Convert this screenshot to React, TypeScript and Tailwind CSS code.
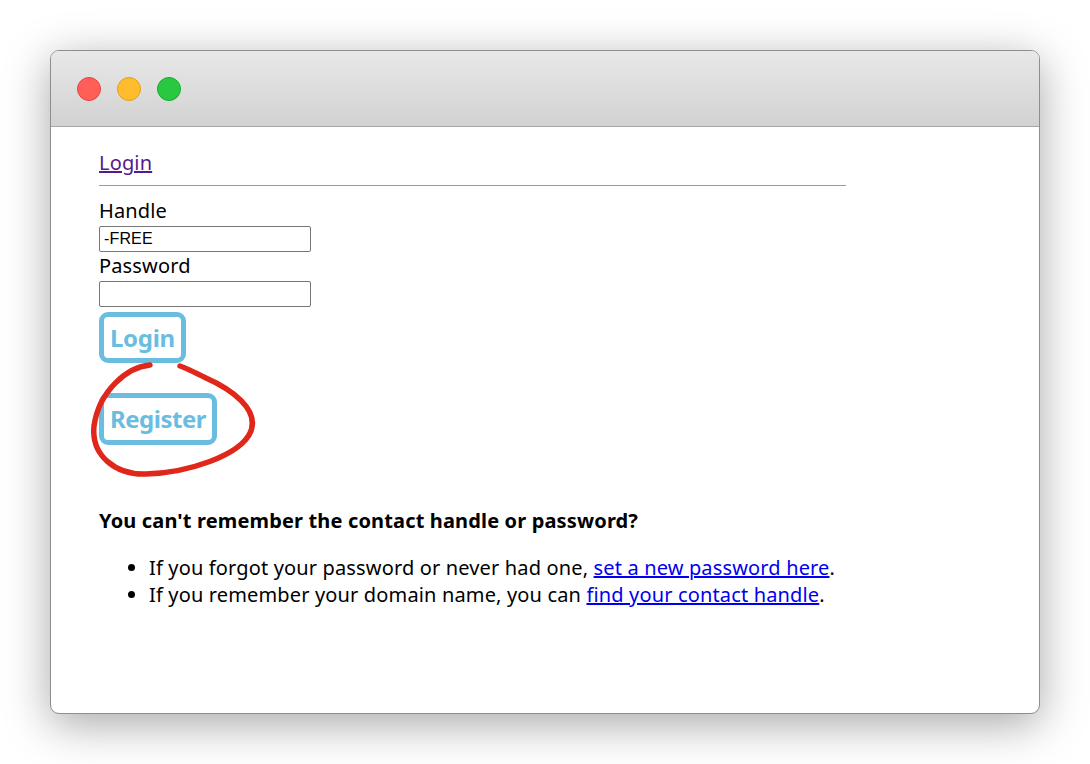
import React from 'react';

const font = { fontFamily: '"Noto Sans", "Open Sans", sans-serif' };

const TrafficLights: React.FC = () => (
    <div className="flex items-center gap-4 pl-[26px]">
        <span className="block h-6 w-6 rounded-full bg-[#ff5f57] border border-[#e2463f]" />
        <span className="block h-6 w-6 rounded-full bg-[#febc2e] border border-[#e1a116]" />
        <span className="block h-6 w-6 rounded-full bg-[#28c840] border border-[#1aab29]" />
    </div>
);

const LoginForm: React.FC = () => (
    <form className="flex flex-col items-start">
        <label className="leading-[26px]">Handle</label>
        <input
            type="text"
            defaultValue="-FREE"
            className="mt-[2px] h-[26px] w-[212px] border border-[#767676] rounded-[2px] px-[4px] text-[16px] text-black"
            style={{ fontFamily: '"Liberation Sans", Arial, sans-serif' }}
        />
        <label className="mt-[1px] leading-[26px]">Password</label>
        <input
            type="password"
            className="mt-[2px] h-[26px] w-[212px] border border-[#767676] rounded-[2px] px-[4px]"
        />
        <button
            type="button"
            className="mt-[5px] h-[51px] px-[6px] border-[5px] border-[#6bbde0] rounded-[9px] text-[#6bbde0] font-bold text-[24px] leading-none tracking-[-0.3px]"
        >
            Login
        </button>
        <div className="relative mt-[30px]">
            <button
                type="button"
                className="h-[52px] px-[6px] border-[5px] border-[#6bbde0] rounded-[9px] text-[#6bbde0] font-bold text-[24px] leading-none tracking-[-0.5px]"
            >
                Register
            </button>
            {/* red marker circle drawn around the register button */}
            <svg
                className="absolute left-[-8px] top-[-32px] pointer-events-none"
                width="170"
                height="122"
                viewBox="0 0 170 122"
                fill="none"
            >
                <path
                    d="M59 4 C 36 6, 8 30, 3 65 C 0 95, 25 114, 55 113 C 95 112, 150 95, 160 70 C 168 48, 140 28, 115 17 C 103 11, 95 7, 89 5"
                    stroke="#e1271a"
                    strokeWidth="5.5"
                    strokeLinecap="round"
                />
                <path
                    d="M128 24 C 158 40, 166 56, 158 74"
                    stroke="#e1271a"
                    strokeWidth="4"
                    strokeLinecap="round"
                />
            </svg>
        </div>
    </form>
);

const App: React.FC = () => {
    return (
        <div className="w-[1090px] h-[764px] bg-white pt-[50px] pl-[50px]" style={font}>
            <div className="w-[990px] h-[664px] rounded-[9px] border border-[#8e8e8e] bg-white shadow-[0_10px_45px_rgba(0,0,0,0.35)] overflow-hidden flex flex-col">
                <div className="h-[76px] flex-shrink-0 flex items-center bg-gradient-to-b from-[#e8e8e8] to-[#d2d2d2] border-b border-[#a8a8a8]">
                    <TrafficLights />
                </div>
                <main className="flex-1 pl-[48px] pt-[21px] text-[20px] text-black tracking-[0.15px]">
                    <a href="#" className="text-[#551a8b] underline leading-[28px]">Login</a>
                    <hr className="mt-[7px] mb-[12px] w-[747px] border-t-[1px] border-[#9a9a9a]" />
                    <LoginForm />
                    <h3 className="mt-[62px] font-bold leading-[28px]">You can't remember the contact handle or password?</h3>
                    <ul className="mt-[19px] list-disc pl-[50px] leading-[27px]">
                        <li>
                            If you forgot your password or never had one,{' '}
                            <a href="#" className="text-[#0000ee] underline">set a new password here</a>.
                        </li>
                        <li>
                            If you remember your domain name, you can{' '}
                            <a href="#" className="text-[#0000ee] underline">find your contact handle</a>.
                        </li>
                    </ul>
                </main>
            </div>
        </div>
    );
};

export default App;
